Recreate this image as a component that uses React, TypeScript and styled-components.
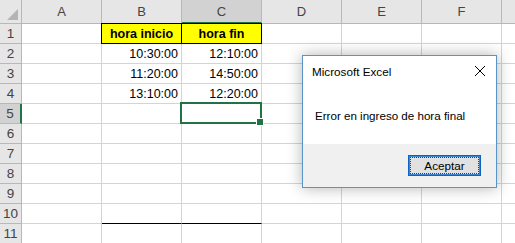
import React from "react";
import styled, { createGlobalStyle } from "styled-components";

const GlobalStyle = createGlobalStyle`
  html, body { margin: 0; padding: 0; background: #ffffff; overflow: hidden; }
  * { box-sizing: border-box; }
`;

const GRID = "#d4d4d4";
const HEAD_LINE = "#b8b8b8";
const GREEN = "#217346";

const Sheet = styled.div`
  position: relative;
  width: 515px;
  height: 243px;
  overflow: hidden;
  display: grid;
  grid-template-columns: 22px repeat(7, 80px);
  grid-template-rows: 24px repeat(11, 20px);
  font-family: "Liberation Sans", Arial, sans-serif;
  background: #fff;
`;

const Corner = styled.div`
  position: relative;
  background: #e6e6e6;
  border-right: 1px solid ${HEAD_LINE};
  border-bottom: 1px solid ${HEAD_LINE};
  &::after {
    content: "";
    position: absolute;
    right: 3px;
    bottom: 3px;
    width: 0;
    height: 0;
    border-left: 11px solid transparent;
    border-bottom: 11px solid #b4b4b4;
  }
`;

const ColHeader = styled.div<{ $sel?: boolean }>`
  background: ${(p) => (p.$sel ? "#d2d2d2" : "#e6e6e6")};
  border-right: 1px solid ${HEAD_LINE};
  border-bottom: ${(p) => (p.$sel ? `2px solid ${GREEN}` : `1px solid ${HEAD_LINE}`)};
  color: #444;
  font-size: 13px;
  display: flex;
  align-items: center;
  justify-content: center;
  padding-top: ${(p) => (p.$sel ? "1px" : "0")};
`;

const RowHeader = styled.div<{ $sel?: boolean }>`
  background: ${(p) => (p.$sel ? "#d2d2d2" : "#e6e6e6")};
  border-right: ${(p) => (p.$sel ? `2px solid ${GREEN}` : `1px solid ${HEAD_LINE}`)};
  border-bottom: 1px solid ${HEAD_LINE};
  color: #444;
  font-size: 13.5px;
  display: flex;
  align-items: center;
  justify-content: center;
`;

const Cell = styled.div<{
  $align?: "left" | "right" | "center";
  $bold?: boolean;
  $fill?: string;
  $boxed?: boolean;
  $first?: boolean;
  $bottomLine?: boolean;
}>`
  position: relative;
  background: ${(p) => p.$fill || "#fff"};
  border-right: 1px solid ${(p) => (p.$boxed ? "#000" : GRID)};
  border-bottom: 1px solid ${(p) => (p.$boxed || p.$bottomLine ? "#000" : GRID)};
  box-shadow: ${(p) =>
    p.$boxed ? (p.$first ? "0 -1px 0 #000, -1px 0 0 #000, -1px -1px 0 #000" : "0 -1px 0 #000") : "none"};
  color: #000;
  font-size: 12.5px;
  font-weight: ${(p) => (p.$bold ? 700 : 400)};
  display: flex;
  align-items: flex-end;
  padding: 0 3px 2px 3px;
  justify-content: ${(p) =>
    p.$align === "right" ? "flex-end" : p.$align === "center" ? "center" : "flex-start"};
  white-space: nowrap;
`;

const Selection = styled.div`
  position: absolute;
  left: -2px;
  top: -2px;
  right: -1px;
  bottom: -1px;
  border: 2px solid ${GREEN};
  z-index: 2;
  pointer-events: none;
  &::after {
    content: "";
    position: absolute;
    right: -4px;
    bottom: -4px;
    width: 6px;
    height: 6px;
    background: ${GREEN};
    border: 1px solid #fff;
  }
`;

const Dialog = styled.div`
  position: absolute;
  left: 302px;
  top: 55px;
  width: 195px;
  height: 133px;
  z-index: 5;
  border: 1px solid #5a94c4;
  background: #fff;
  box-shadow: 0 0 14px rgba(0, 0, 0, 0.3);
  display: flex;
  flex-direction: column;
  font-family: "Liberation Sans", Arial, sans-serif;
`;

const TitleBar = styled.div`
  height: 30px;
  display: flex;
  align-items: center;
  justify-content: space-between;
  padding: 0 8px 0 9px;
  font-size: 11.7px;
  color: #000;
`;

const CloseIcon = styled.svg`
  width: 12px;
  height: 12px;
  margin-right: 2px;
`;

const Body = styled.div`
  flex: 1;
  display: flex;
  align-items: center;
  padding: 0 0 0 12px;
  font-size: 11.6px;
  color: #000;
`;

const Footer = styled.div`
  height: 43px;
  background: #f0f0f0;
  display: flex;
  justify-content: flex-end;
  align-items: flex-start;
  padding: 11px 15px 0 0;
`;

const Button = styled.button`
  position: relative;
  width: 73px;
  height: 21px;
  background: #e1e1e1;
  border: 1px solid #0a64c8;
  box-shadow: inset 0 0 0 1px #3d86d6;
  font-family: "Liberation Sans", Arial, sans-serif;
  font-size: 11.7px;
  color: #000;
  padding: 0;
  &::after {
    content: "";
    position: absolute;
    inset: 1px;
    border: 1px dotted #3b3b5a;
  }
`;

const cols = ["A", "B", "C", "D", "E", "F", "G"];

type CellDef = {
  text?: string;
  align?: "left" | "right" | "center";
  bold?: boolean;
  fill?: string;
  boxed?: boolean;
  first?: boolean;
  bottomLine?: boolean;
  selected?: boolean;
};

const data: Record<string, CellDef> = {
  B1: { text: "hora inicio", align: "center", bold: true, fill: "#ffff00", boxed: true, first: true },
  C1: { text: "hora fin", align: "center", bold: true, fill: "#ffff00", boxed: true },
  B2: { text: "10:30:00", align: "right" },
  C2: { text: "12:10:00", align: "right" },
  B3: { text: "11:20:00", align: "right" },
  C3: { text: "14:50:00", align: "right" },
  B4: { text: "13:10:00", align: "right" },
  C4: { text: "12:20:00", align: "right" },
  C5: { selected: true },
  B10: { bottomLine: true },
  C10: { bottomLine: true },
};

export default function App() {
  const rows = Array.from({ length: 11 }, (_, i) => i + 1);
  return (
    <>
      <GlobalStyle />
      <Sheet>
        <Corner />
        {cols.map((c) => (
          <ColHeader key={c} $sel={c === "C"}>
            {c === "G" ? "" : c}
          </ColHeader>
        ))}
        {rows.map((r) => (
          <React.Fragment key={r}>
            <RowHeader $sel={r === 5}>{r}</RowHeader>
            {cols.map((c) => {
              const d = data[c + r] || {};
              return (
                <Cell
                  key={c + r}
                  $align={d.align}
                  $bold={d.bold}
                  $fill={d.fill}
                  $boxed={d.boxed}
                  $first={d.first}
                  $bottomLine={d.bottomLine}
                >
                  {d.text}
                  {d.selected && <Selection />}
                </Cell>
              );
            })}
          </React.Fragment>
        ))}
        <Dialog>
          <TitleBar>
            <span>Microsoft Excel</span>
            <CloseIcon viewBox="0 0 12 12">
              <path d="M1 1 L11 11 M11 1 L1 11" stroke="#000" strokeWidth="1" fill="none" />
            </CloseIcon>
          </TitleBar>
          <Body>Error en ingreso de hora final</Body>
          <Footer>
            <Button>Aceptar</Button>
          </Footer>
        </Dialog>
      </Sheet>
    </>
  );
}
